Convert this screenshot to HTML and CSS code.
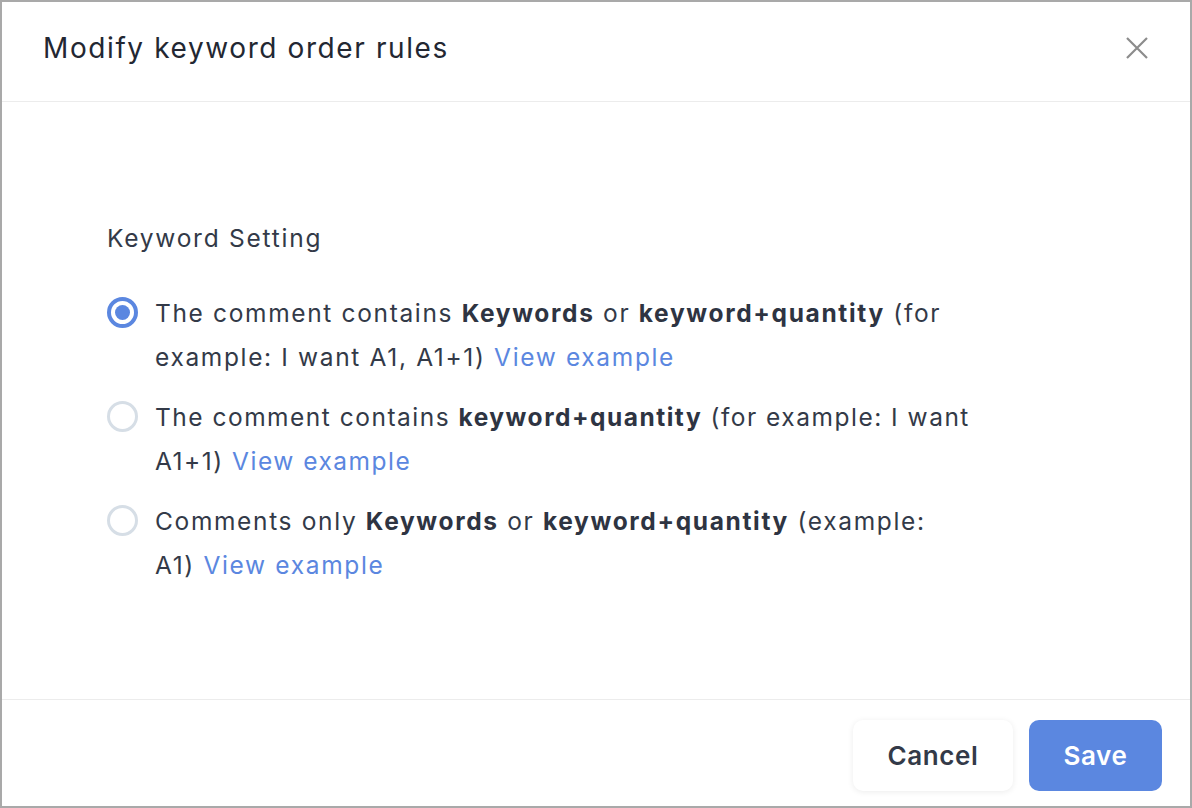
FILE: index.html
```html
<!DOCTYPE html>
<html lang="en">
<head>
<meta charset="utf-8">
<title>Modify keyword order rules</title>
<link rel="stylesheet" href="styles.css">
</head>
<body>
<div class="dialog">
  <header class="dialog-header">
    <h1 class="dialog-title">Modify keyword order rules</h1>
    <button class="close-btn" aria-label="Close">
      <svg width="24" height="24" viewBox="0 0 24 24"><path d="M2 2 L22 22 M22 2 L2 22" stroke="#8c8c8c" stroke-width="2.2" fill="none"/></svg>
    </button>
  </header>
  <main class="dialog-body">
    <div class="section-label">Keyword Setting</div>
    <div class="options">
      <label class="option">
        <span class="radio checked"></span>
        <span class="option-text">The comment contains <b>Keywords</b> or <b>keyword+quantity</b> (for<br>example: I want A1, A1+1) <a class="link">View example</a></span>
      </label>
      <label class="option">
        <span class="radio"></span>
        <span class="option-text">The comment contains <b>keyword+quantity</b> (for example: I want<br>A1+1) <a class="link">View example</a></span>
      </label>
      <label class="option">
        <span class="radio"></span>
        <span class="option-text">Comments only <b>Keywords</b> or <b>keyword+quantity</b> (example:<br>A1) <a class="link">View example</a></span>
      </label>
    </div>
  </main>
  <footer class="dialog-footer">
    <button class="btn btn-cancel">Cancel</button>
    <button class="btn btn-save">Save</button>
  </footer>
</div>
</body>
</html>
```
FILE: styles.css
```css
* { box-sizing: border-box; }
html, body { margin: 0; padding: 0; }
body {
  width: 1192px;
  height: 808px;
  font-family: Inter, "Noto Sans", "Liberation Sans", sans-serif;
  color: #333a48;
  background: #fff;
}
.dialog {
  width: 1192px;
  height: 808px;
  border: 2px solid #a9a9a9;
  display: flex;
  flex-direction: column;
  background: #fff;
}
.dialog-header {
  height: 100px;
  border-bottom: 1px solid #ececec;
  display: flex;
  align-items: center;
  justify-content: space-between;
  padding: 0 41px 7px 41px;
  flex: none;
}
.dialog-title {
  margin: 0;
  font-size: 28px;
  font-weight: 400;
  letter-spacing: 1.6px;
  color: #232732;
}
.close-btn {
  border: 0;
  background: none;
  padding: 0;
  width: 24px;
  height: 24px;
  display: flex;
}
.dialog-body {
  flex: 1;
  padding: 121px 0 0 105px;
}
.section-label {
  font-size: 24.5px;
  line-height: 30px;
  letter-spacing: 1.75px;
  color: #333a48;
  margin-bottom: 38px;
}
.options {
  display: flex;
  flex-direction: column;
  gap: 16px;
}
.option {
  display: flex;
  align-items: flex-start;
  gap: 17px;
  font-size: 24.5px;
  line-height: 44px;
  letter-spacing: 1.65px;
}
.option:nth-child(2) .option-text { letter-spacing: 1.5px; }
.radio {
  flex: none;
  width: 31px;
  height: 31px;
  border-radius: 50%;
  border: 3px solid #d6dee6;
  margin-top: 6px;
  position: relative;
}
.radio.checked {
  border: 4px solid #5b87e0;
}
.radio.checked::after {
  content: "";
  position: absolute;
  left: 4px;
  top: 4px;
  width: 15px;
  height: 15px;
  border-radius: 50%;
  background: #5b87e0;
}
.option-text b { font-weight: 700; color: #2e3442; }
.link { color: #5b87e0; text-decoration: none; }
.dialog-footer {
  flex: none;
  height: 107px;
  border-top: 1px solid #ececec;
  display: flex;
  justify-content: flex-end;
  align-items: flex-start;
  gap: 16px;
  padding: 20px 28px 0 0;
}
.btn {
  height: 71px;
  border-radius: 10px;
  font-family: inherit;
  font-size: 26px;
  font-weight: 600;
  letter-spacing: 0.6px;
  border: 0;
  padding: 0;
}
.btn-cancel {
  width: 160px;
  background: #fff;
  color: #333a48;
  box-shadow: 0 1px 6px rgba(0,0,0,0.08);
}
.btn-save {
  width: 133px;
  background: #5b87e0;
  color: #fff;
}
```
